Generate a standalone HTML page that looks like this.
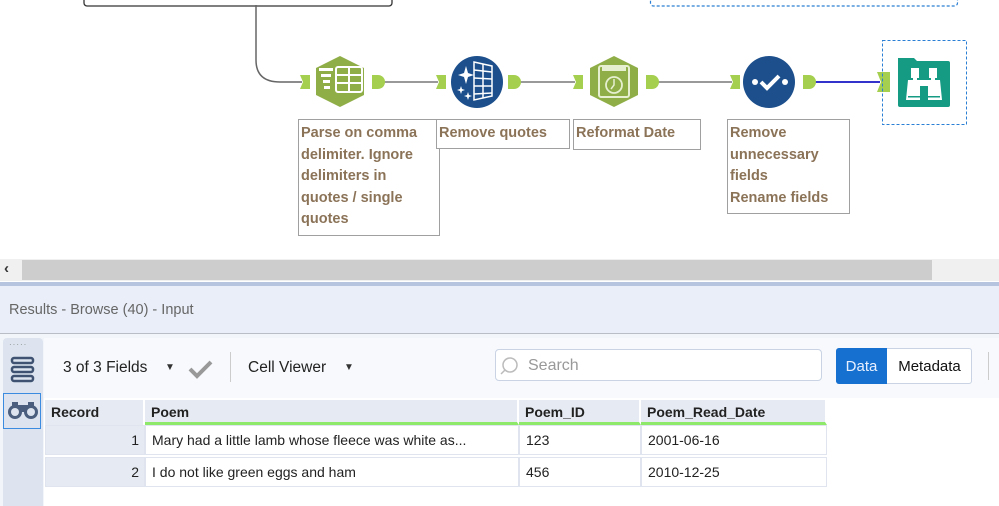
<!DOCTYPE html>
<html><head><meta charset="utf-8"><style>
body{margin:0;width:999px;height:506px;overflow:hidden;background:#fff;font-family:"Liberation Sans",sans-serif;position:relative}
.a{position:absolute}
.ann{position:absolute;border:1px solid #a0a0a0;color:#8b7358;font-size:14.5px;font-weight:bold;line-height:21.5px;padding:3px 2px;box-sizing:border-box;background:#fff}
.th{position:absolute;top:400px;height:25px;background:#e6ebf3;font-weight:bold;font-size:14px;color:#222;line-height:24px;padding-left:6px;box-sizing:border-box;border-right:2px solid #fff}
.td{position:absolute;height:30px;background:#fff;font-size:14px;color:#222;line-height:29px;padding-left:6px;box-sizing:border-box;border:1px solid #dfe4ee;white-space:nowrap;overflow:hidden}
</style></head><body>
<svg class="a" style="left:0;top:0" width="999" height="240">
<rect x="84" y="-10" width="308" height="16" rx="3" fill="none" stroke="#333" stroke-width="1.3"/>
<rect x="650.5" y="-10" width="307" height="16" rx="3" fill="none" stroke="#2a7fd4" stroke-width="1.2" stroke-dasharray="3,2"/>
<path d="M256 5 V60 Q256 82 280 82 H302" fill="none" stroke="#666" stroke-width="1.5"/>
<g stroke="#999" stroke-width="2"><line x1="382" y1="82" x2="438" y2="82"/><line x1="518" y1="82" x2="575" y2="82"/><line x1="656" y1="82" x2="732" y2="82"/></g>
<line x1="813" y1="82" x2="880" y2="82" stroke="#3333cc" stroke-width="2"/>
<g fill="#a5cf4e">
<path d="M300 75h10v14h-10l3-7z"/><path d="M372 75h6a7 7 0 0 1 0 14h-6z"/>
<path d="M436 75h10v14h-10l3-7z"/><path d="M508 75h6a7 7 0 0 1 0 14h-6z"/>
<path d="M573 75h10v14h-10l3-7z"/><path d="M646 75h6a7 7 0 0 1 0 14h-6z"/>
<path d="M730 75h10v14h-10l3-7z"/><path d="M803 75h6a7 7 0 0 1 0 14h-6z"/>
<path d="M877 72h13v20h-13l4-10z"/></g>
<path d="M340 56l24 12v27l-24 12l-24-12v-27z" fill="#8fae47"/>
<g fill="#fff"><rect x="319" y="68" width="14" height="3"/><rect x="321" y="74" width="10" height="3"/><rect x="323" y="80" width="7" height="3"/><rect x="324" y="86" width="6" height="3"/><rect x="336" y="67" width="26" height="25" rx="2" fill="none" stroke="#fff" stroke-width="2"/><line x1="349" y1="67" x2="349" y2="92" stroke="#fff" stroke-width="2"/><line x1="336" y1="75" x2="362" y2="75" stroke="#fff" stroke-width="2"/><line x1="336" y1="83" x2="362" y2="83" stroke="#fff" stroke-width="2"/></g>
<circle cx="477" cy="82" r="26" fill="#1c4f8c"/>
<g stroke="#fff" stroke-width="1.5" fill="none"><path d="M474 62l18 4v30l-18 4z"/><line x1="474" y1="70" x2="492" y2="72"/><line x1="474" y1="78" x2="492" y2="79"/><line x1="474" y1="86" x2="492" y2="86"/><line x1="474" y1="94" x2="492" y2="93"/><line x1="483" y1="64" x2="483" y2="98"/></g>
<path d="M466 66l2 7 6 2-6 2-2 7-2-7-6-2 6-2z M461 86l1 3 3 1-3 1-1 3-1-3-3-1 3-1z M468 92l1 3 3 1-3 1-1 3-1-3-3-1 3-1z" fill="#fff"/>
<path d="M614 56l24 12v27l-24 12l-24-12v-27z" fill="#8fae47"/>
<rect x="599" y="66" width="30" height="31" rx="2" fill="none" stroke="#e6efcf" stroke-width="2"/><rect x="602" y="67" width="24" height="4" fill="#e6efcf"/>
<circle cx="614" cy="85" r="8" fill="none" stroke="#e6efcf" stroke-width="1.8"/><path d="M614 79v6l-3 4" stroke="#e6efcf" stroke-width="1.5" fill="none"/>
<circle cx="769" cy="82" r="26" fill="#1c4f8c"/>
<circle cx="755" cy="82" r="3" fill="#fff"/><circle cx="785" cy="82" r="3" fill="#fff"/><path d="M761 82l6 6l12-12" stroke="#fff" stroke-width="4" fill="none"/>
<rect x="882.5" y="40.5" width="84" height="84" fill="none" stroke="#2a7fd4" stroke-dasharray="3,2"/>
<path d="M898 58h16l3 3h31a2 2 0 0 1 2 2v42a2 2 0 0 1-2 2h-48a2 2 0 0 1-2-2z" fill="#159a84"/>
<g fill="#fff"><path d="M911 68h8v10h-2v6h-4v-6h-2z"/><path d="M929 68h8v10h-2v6h-4v-6h-2z"/><path d="M908 80h12v20h-14z"/><path d="M928 80h12l2 20h-14z"/><rect x="918" y="80" width="12" height="6"/></g>
<g fill="#159a84"><rect x="908" y="96" width="12" height="1.5"/><rect x="928" y="96" width="12" height="1.5"/></g>
</svg>
<div class="ann" style="left:298px;top:119px;width:142px;height:117px">Parse on comma delimiter. Ignore delimiters in quotes / single quotes</div>
<div class="ann" style="left:436px;top:119px;width:134px;height:30px">Remove quotes</div>
<div class="ann" style="left:573px;top:119px;width:128px;height:31px">Reformat Date</div>
<div class="ann" style="left:727px;top:119px;width:123px;height:95px">Remove unnecessary fields<br>Rename fields</div>

<div class="a" style="left:0;top:259px;width:999px;height:22px;background:#f0f0f0"></div>
<div class="a" style="left:22px;top:260px;width:910px;height:20px;background:#cdcdcd"></div>
<div class="a" style="left:4px;top:260px;font-size:15px;color:#333;font-weight:bold">&lsaquo;</div>
<div class="a" style="left:0;top:282px;width:999px;height:4px;background:#b6c4e0"></div>
<div class="a" style="left:0;top:286px;width:999px;height:47px;background:#e9eef8;border-bottom:1px solid #b9bdc6"></div>
<div class="a" style="left:9px;top:302px;font-size:14.5px;color:#666">Results - Browse (40) - Input</div>
<div class="a" style="left:0;top:334px;width:999px;height:172px;background:#f2f5fa"></div>
<div class="a" style="left:44px;top:338px;width:955px;height:60px;background:#f7f9fc"></div>
<div class="a" style="left:3px;top:338px;width:40px;height:168px;background:#dde4ef;border-radius:4px 4px 0 0"></div>
<div class="a" style="left:9px;top:340px;font-size:8px;color:#888;letter-spacing:1px">·····</div>
<svg class="a" style="left:10px;top:356px" width="26" height="30"><g fill="none" stroke="#3f5272" stroke-width="2.5"><rect x="2" y="2" width="21" height="5" rx="2"/><rect x="2" y="11" width="21" height="5" rx="2"/><rect x="2" y="20" width="21" height="5" rx="2"/></g></svg>
<div class="a" style="left:3px;top:393px;width:38px;height:36px;border:1.5px solid #3b8be0;box-sizing:border-box"></div>
<svg class="a" style="left:6px;top:399px" width="34" height="22"><g fill="#4b5e7e"><circle cx="9" cy="13" r="7"/><circle cx="25" cy="13" r="7"/><rect x="9" y="6" width="16" height="7"/><rect x="6" y="3" width="6" height="6"/><rect x="22" y="3" width="6" height="6"/></g><circle cx="9" cy="13" r="4" fill="#dde4ef"/><circle cx="25" cy="13" r="4" fill="#dde4ef"/></svg>
<div class="a" style="left:63px;top:359px;font-size:15.5px;color:#222">3 of 3 Fields</div>
<div class="a" style="left:165px;top:362px;font-size:10px;color:#333">▼</div>
<svg class="a" style="left:188px;top:359px" width="26" height="20"><path d="M2 10l7 7l14-14" stroke="#999" stroke-width="4" fill="none"/></svg>
<div class="a" style="left:230px;top:352px;width:1px;height:30px;background:#ccc"></div>
<div class="a" style="left:248px;top:359px;font-size:15.5px;color:#222">Cell Viewer</div>
<div class="a" style="left:344px;top:362px;font-size:10px;color:#333">▼</div>
<div class="a" style="left:495px;top:349px;width:327px;height:32px;background:#fff;border:1px solid #c9d3e4;border-radius:4px;box-sizing:border-box"></div>
<svg class="a" style="left:500px;top:356px" width="22" height="20"><circle cx="10" cy="9" r="7" fill="none" stroke="#bbb" stroke-width="1.5"/><line x1="5" y1="14" x2="1" y2="18" stroke="#bbb" stroke-width="1.5"/></svg>
<div class="a" style="left:528px;top:357px;font-size:16px;color:#999">Search</div>
<div class="a" style="left:836px;top:348px;width:136px;height:36px;background:#fff;border:1px solid #c9d3e4;border-radius:3px;box-sizing:border-box"></div>
<div class="a" style="left:836px;top:348px;width:51px;height:36px;background:#1670cf;border-radius:3px 0 0 3px;color:#e8f0ff;font-size:15px;line-height:38px;text-align:center">Data</div>
<div class="a" style="left:887px;top:348px;width:85px;height:36px;color:#111;font-size:15px;line-height:38px;text-align:center">Metadata</div>
<div class="a" style="left:988px;top:352px;width:1px;height:28px;background:#ccc"></div>
<div class="a" style="left:44px;top:398px;width:955px;height:108px;background:#fff"></div>
<div class="th" style="left:45px;width:100px">Record</div>
<div class="th" style="left:145px;width:374px;border-bottom:3px solid #8ee86a">Poem</div>
<div class="th" style="left:519px;width:122px;border-bottom:3px solid #8ee86a">Poem_ID</div>
<div class="th" style="left:641px;width:186px;border-bottom:3px solid #8ee86a">Poem_Read_Date</div>
<div class="td" style="left:45px;top:425px;width:100px;background:#e6ebf3;text-align:right;padding-right:5px">1</div>
<div class="td" style="left:145px;top:425px;width:374px">Mary had a little lamb whose fleece was white as...</div>
<div class="td" style="left:519px;top:425px;width:122px">123</div>
<div class="td" style="left:641px;top:425px;width:186px">2001-06-16</div>
<div class="td" style="left:45px;top:457px;width:100px;background:#e6ebf3;text-align:right;padding-right:5px">2</div>
<div class="td" style="left:145px;top:457px;width:374px">I do not like green eggs and ham</div>
<div class="td" style="left:519px;top:457px;width:122px">456</div>
<div class="td" style="left:641px;top:457px;width:186px">2010-12-25</div>
</body></html>
